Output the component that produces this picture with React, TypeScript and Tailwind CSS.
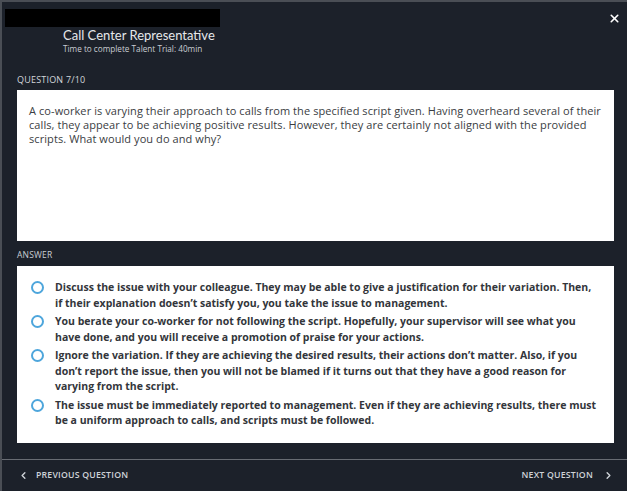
import { ChevronLeft, ChevronRight, X } from 'lucide-react';

const QUESTION =
  'A co-worker is varying their approach to calls from the specified script given. Having overheard several of their calls, they appear to be achieving positive results. However, they are certainly not aligned with the provided scripts. What would you do and why?';

const OPTIONS = [
  'Discuss the issue with your colleague. They may be able to give a justification for their variation. Then, if their explanation doesn’t satisfy you, you take the issue to management.',
  'You berate your co-worker for not following the script. Hopefully, your supervisor will see what you have done, and you will receive a promotion of praise for your actions.',
  'Ignore the variation. If they are achieving the desired results, their actions don’t matter. Also, if you don’t report the issue, then you will not be blamed if it turns out that they have a good reason for varying from the script.',
  'The issue must be immediately reported to management. Even if they are achieving results, there must be a uniform approach to calls, and scripts must be followed.',
];

export default function App() {
  return (
    <div className="relative flex h-[491px] w-[627px] flex-col overflow-hidden border-l-2 border-t-2 border-[#4a4e55] bg-[#1c212a] font-['Open_Sans','Liberation_Sans',sans-serif]">
      {/* header */}
      <div className="ml-[3px] mt-[7px] h-[18px] w-[215px] bg-black" />
      <div className="ml-[61px]">
        <div className="font-['Lato',sans-serif] text-[13px] leading-[16px] text-[#e6e8eb]">
          Call Center Representative
        </div>
        <div className="mt-[1px] text-[8.2px] leading-[10px] text-[#c9cdd3]">
          Time to complete Talent Trial: 40min
        </div>
      </div>
      <button type="button" className="absolute right-[6px] top-[10px] text-white">
        <X size={13} strokeWidth={3} />
      </button>

      {/* question */}
      <div className="ml-[15px] mt-[20px] w-[597px]">
        <div className="text-[9px] leading-[12px] tracking-[0.2px] text-[#d3d6db]">QUESTION 7/10</div>
        <div className="mt-[4px] h-[151px] bg-white px-[12px] pt-[14px] text-[11px] leading-[14px] tracking-[0.08px] text-[#3a3d42]">
          {QUESTION}
        </div>

        <div className="mt-[8px] text-[8.5px] leading-[12px] tracking-[0.2px] text-[#c9cdd3]">ANSWER</div>
        <ul className="mt-[5px] flex h-[177px] flex-col gap-[3px] bg-white pl-[14px] pr-[15px] pt-[14px]">
          {OPTIONS.map((opt) => (
            <li key={opt} className="flex items-start gap-[11px]">
              <span className="mt-[1px] h-[13px] w-[13px] shrink-0 rounded-full border-2 border-[#4ea6dc]" />
              <span className="text-[10.5px] font-bold leading-[15.5px] text-[#33363b]">{opt}</span>
            </li>
          ))}
        </ul>
      </div>

      {/* footer */}
      <div className="mt-auto border-t border-[#686c73]">
        <div className="flex h-[31px] items-center justify-between pl-[16px] pr-[13px] text-[8.75px] font-semibold tracking-[0.2px] text-[#cfd3d8]">
          <button type="button" className="flex items-center gap-[7px]">
            <ChevronLeft size={11} strokeWidth={3} />
            PREVIOUS QUESTION
          </button>
          <button type="button" className="flex items-center gap-[10px]">
            NEXT QUESTION
            <ChevronRight size={11} strokeWidth={3} />
          </button>
        </div>
      </div>
    </div>
  );
}
